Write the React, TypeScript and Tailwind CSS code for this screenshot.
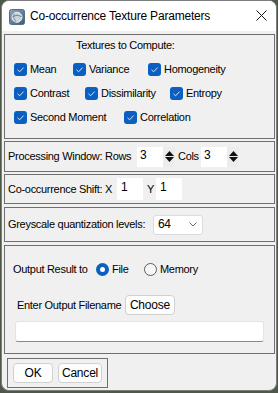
import React from "react";

const font = "font-['Liberation_Sans',Arial,sans-serif] text-[11px] tracking-[-0.3px] text-black leading-[13px]";

function Check({ label, w }: { label: string; w: number }) {
  return (
    <div className="flex items-center shrink-0" style={{ width: w }}>
      <div className="w-[13px] h-[13px] rounded-[3px] bg-[#0a5fc2] flex items-center justify-center shrink-0">
        <svg width="13" height="13" viewBox="0 0 13 13">
          <path d="M3.5 6.8 L5.6 8.8 L9.6 4.6" fill="none" stroke="#dbe8f7" strokeWidth="1" />
        </svg>
      </div>
      <span className="ml-[3px] whitespace-nowrap">{label}</span>
    </div>
  );
}

function Spin({ value }: { value: string }) {
  return (
    <div className="w-[38px] h-[20px] bg-white flex items-stretch shrink-0">
      <span className="flex-1 pl-[3px] pt-[2px] text-[12px]">{value}</span>
      <div className="w-[12px] bg-[#ececec] flex flex-col items-center justify-center gap-[1px]">
        <svg width="9" height="5" viewBox="0 0 9 5"><path d="M0 5 L4.5 0 L9 5 Z" fill="#111" /></svg>
        <svg width="9" height="5" viewBox="0 0 9 5"><path d="M0 0 L4.5 5 L9 0 Z" fill="#111" /></svg>
      </div>
    </div>
  );
}

function Btn({ label, w }: { label: string; w: number }) {
  return (
    <div
      className="h-[20px] bg-[#fdfdfd] border border-[#d0d0d0] rounded-[4px] flex items-center justify-center shrink-0"
      style={{ width: w }}
    >
      <span className="text-[12px] tracking-[-0.2px]">{label}</span>
    </div>
  );
}

export default function App() {
  return (
    <div className="w-[278px] h-[393px] bg-[#4d5849] overflow-hidden">
      <div className={`ml-[1px] w-[276px] h-[391px] rounded-[8px] border border-[#7d7d7d] bg-[#f0f0f0] overflow-hidden flex flex-col ${font}`}>
        {/* Title bar */}
        <div className="h-[30px] bg-white flex items-center shrink-0">
          <div className="ml-[7px] mt-[2px] w-[16px] h-[16px] shrink-0">
            <svg width="16" height="16" viewBox="0 0 16 16">
              <defs>
                <linearGradient id="ig" x1="0" y1="0" x2="1" y2="1">
                  <stop offset="0" stopColor="#8fa6bd" />
                  <stop offset="1" stopColor="#3e5873" />
                </linearGradient>
              </defs>
              <rect x="0.5" y="0.5" width="15" height="15" rx="2" fill="url(#ig)" stroke="#566d84" />
              <circle cx="8" cy="8.3" r="5" fill="#c9d3dc" stroke="#eef2f5" strokeWidth="1" />
              <path d="M3.5 7.5 Q8 5 12.5 7.5" fill="none" stroke="#6c8097" strokeWidth="1" />
              <path d="M5 4.5 Q3.5 9 7 13" fill="none" stroke="#6c8097" strokeWidth="0.8" />
            </svg>
          </div>
          <span className="ml-[5px] text-[12px] tracking-[-0.2px] whitespace-nowrap">Co-occurrence Texture Parameters</span>
          <div className="ml-auto mr-[9px] mt-[-1px]">
            <svg width="11" height="11" viewBox="0 0 11 11">
              <path d="M0.5 0.5 L10.5 10.5 M10.5 0.5 L0.5 10.5" stroke="#111" strokeWidth="1" />
            </svg>
          </div>
        </div>

        {/* Content */}
        <div className="pl-[2px] pr-[1px] flex flex-col">
          {/* Panel 1 */}
          <div className="mt-[3px] h-[105px] border border-[#6f6f6f] flex flex-col">
            <div className="mt-[4px] h-[13px] pl-[71px] whitespace-nowrap">Textures to Compute:</div>
            <div className="mt-[5px] flex flex-col pl-[9px]">
              <div className="h-[24px] flex items-center">
                <Check label="Mean" w={59} />
                <Check label="Variance" w={75} />
                <Check label="Homogeneity" w={90} />
              </div>
              <div className="h-[24px] flex items-center">
                <Check label="Contrast" w={71} />
                <Check label="Dissimilarity" w={85} />
                <Check label="Entropy" w={60} />
              </div>
              <div className="h-[24px] flex items-center">
                <Check label="Second Moment" w={110} />
                <Check label="Correlation" w={80} />
              </div>
            </div>
          </div>

          {/* Panel 2 */}
          <div className="mt-[2px] h-[31px] border border-[#6f6f6f] flex items-center pl-[3px]">
            <span className="w-[129px] whitespace-nowrap shrink-0">Processing Window: Rows</span>
            <Spin value="3" />
            <span className="ml-[3px] w-[23px] shrink-0">Cols</span>
            <Spin value="3" />
          </div>

          {/* Panel 3 */}
          <div className="mt-[2px] h-[30px] border border-[#6f6f6f] flex items-center pl-[3px]">
            <span className="w-[109px] whitespace-nowrap shrink-0">Co-occurrence Shift: X</span>
            <div className="w-[26px] h-[22px] bg-white pl-[4px] pt-[3px] text-[12px] shrink-0">1</div>
            <span className="ml-[4px] w-[9px] shrink-0">Y</span>
            <div className="w-[26px] h-[22px] bg-white pl-[4px] pt-[3px] text-[12px] shrink-0">1</div>
          </div>

          {/* Panel 4 */}
          <div className="mt-[3px] h-[35px] border border-[#6f6f6f] flex items-center pl-[3px]">
            <span className="w-[145px] whitespace-nowrap shrink-0">Greyscale quantization levels:</span>
            <div className="w-[50px] h-[20px] bg-white border border-[#dcdcdc] rounded-[3px] flex items-center pl-[4px] pr-[5px] shrink-0">
              <span className="text-[12px]">64</span>
              <svg className="ml-auto" width="8" height="5" viewBox="0 0 8 5">
                <path d="M0.5 0.5 L4 4 L7.5 0.5" fill="none" stroke="#6a6a6a" strokeWidth="1" />
              </svg>
            </div>
          </div>

          {/* Panel 5 */}
          <div className="mt-[3px] h-[109px] border border-[#6f6f6f] flex flex-col pl-[8px]">
            <div className="mt-[15px] h-[16px] flex items-center">
              <span className="w-[83px] whitespace-nowrap shrink-0">Output Result to</span>
              <div className="w-[48px] flex items-center shrink-0">
                <div className="w-[13px] h-[13px] rounded-full bg-[#0a5fc2] flex items-center justify-center">
                  <div className="w-[5px] h-[5px] rounded-full bg-white" />
                </div>
                <span className="ml-[3px]">File</span>
              </div>
              <div className="flex items-center shrink-0">
                <div className="w-[13px] h-[13px] rounded-full border border-[#5c5c5c] bg-[#f7f7f7]" />
                <span className="ml-[3px]">Memory</span>
              </div>
            </div>
            <div className="mt-[18px] h-[20px] flex items-center pl-[4px]">
              <span className="w-[108px] whitespace-nowrap shrink-0">Enter Output Filename</span>
              <Btn label="Choose" w={50} />
            </div>
            <div className="mt-[6px] ml-[2px] w-[249px] h-[21px] bg-white border border-[#e3e3e3] border-b-[#8a8a8a] rounded-[3px]" />
          </div>

          {/* Buttons panel */}
          <div className="mt-[4px] ml-[3px] w-[101px] h-[30px] border border-[#6f6f6f] flex items-center pl-[5px] gap-[5px]">
            <Btn label="OK" w={40} />
            <Btn label="Cancel" w={44} />
          </div>
        </div>
      </div>
    </div>
  );
}
